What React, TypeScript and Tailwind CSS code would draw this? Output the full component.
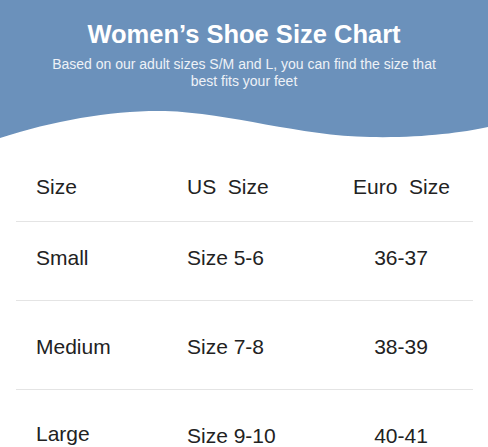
import React from "react";

const rows = [
  { a: "Small", b: "Size 5-6", c: "36-37", pt: "pt-[24px]", h: "h-[78px]", aShift: "" },
  { a: "Medium", b: "Size 7-8", c: "38-39", pt: "pt-[34px]", h: "h-[88px]", aShift: "" },
  { a: "Large", b: "Size 9-10", c: "40-41", pt: "pt-[34px]", h: "h-[88px]", aShift: "-mt-[2px]" },
];

export default function App() {
  return (
    <div className="w-[488px] h-[447px] overflow-hidden bg-white" style={{ fontFamily: '"Liberation Sans", Arial, sans-serif' }}>
      <div className="bg-[#6b91bb] h-[105px] pt-[20px] flex flex-col items-center text-white">
        <h1 className="text-[25.5px] leading-[29px] font-bold">Women’s Shoe Size Chart</h1>
        <p className="mt-[7px] text-[14px] leading-[17px] text-center text-[#eef2f7] w-[392px]">
          Based on our adult sizes S/M and L, you can find the size that best fits your feet
        </p>
      </div>
      <svg width="488" height="35" viewBox="0 0 488 35" className="block">
        <path
          d="M0,33 C55,15 115,5 165,6 C230,8 300,31 370,32 C420,33 460,28 488,22 L488,0 L0,0 Z"
          fill="#6b91bb"
        />
      </svg>
      <div className="text-[21px] leading-[24px] text-[#222]">
        <div className="h-[81px] pt-[35px] pl-[36px] flex items-start whitespace-pre">
          <div className="w-[151px]">Size</div>
          <div className="w-[166px]">US  Size</div>
          <div className="w-[96px] text-center">Euro  Size</div>
        </div>
        {rows.map((r, i) => (
          <div key={i}>
            <div className="h-px bg-[#e4e4e4] ml-[16px] w-[457px]" />
            <div className={`${r.h} ${r.pt} pl-[36px] flex items-start`}>
              <div className={`w-[151px] ${r.aShift}`}>{r.a}</div>
              <div className="w-[166px]">{r.b}</div>
              <div className="w-[96px] text-center">{r.c}</div>
            </div>
          </div>
        ))}
      </div>
    </div>
  );
}
